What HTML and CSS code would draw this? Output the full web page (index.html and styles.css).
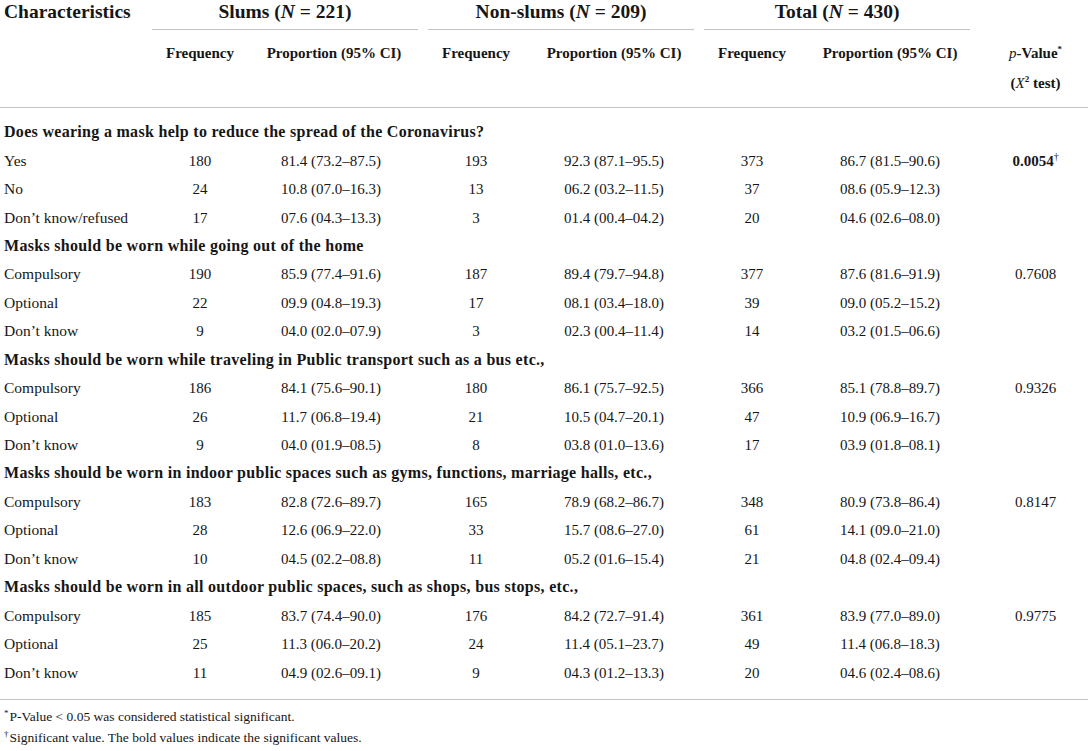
FILE: index.html
```html
<!DOCTYPE html>
<html lang="en">
<head>
<meta charset="utf-8">
<title>Mask perceptions table</title>
<link rel="stylesheet" href="styles.css">
</head>
<body>
<div class="wrap">
<table class="tbl">
  <colgroup>
    <col class="c-char">
    <col class="c-freq"><col class="c-prop">
    <col class="c-freq"><col class="c-prop">
    <col class="c-freq"><col class="c-prop">
    <col class="c-p">
  </colgroup>
  <thead>
    <tr class="h1">
      <th class="th-char" rowspan="2">Characteristics</th>
      <th class="grp" colspan="2"><div class="grp-in">Slums (<i>N</i> = 221)</div></th>
      <th class="grp" colspan="2"><div class="grp-in">Non-slums (<i>N</i> = 209)</div></th>
      <th class="grp" colspan="2"><div class="grp-in">Total (<i>N</i> = 430)</div></th>
      <th class="th-blank"></th>
    </tr>
    <tr class="h2">
      <th>Frequency</th><th class="prop prop-s">Proportion (95% CI)</th>
      <th>Frequency</th><th class="prop">Proportion (95% CI)</th>
      <th>Frequency</th><th class="prop">Proportion (95% CI)</th>
      <th class="pv"><i>p</i>-Value<sup class="ast">*</sup><br>(<i>X</i><sup>2</sup> test)</th>
    </tr>
  </thead>
  <tbody>
    <tr class="sec first"><td colspan="8">Does wearing a mask help to reduce the spread of the Coronavirus?</td></tr>
    <tr><td class="lab">Yes</td><td>180</td><td class="prop-s">81.4 (73.2–87.5)</td><td>193</td><td>92.3 (87.1–95.5)</td><td>373</td><td>86.7 (81.5–90.6)</td><td class="pv"><b>0.0054</b><sup class="dag">†</sup></td></tr>
    <tr><td class="lab">No</td><td>24</td><td class="prop-s">10.8 (07.0–16.3)</td><td>13</td><td>06.2 (03.2–11.5)</td><td>37</td><td>08.6 (05.9–12.3)</td><td class="pv"></td></tr>
    <tr><td class="lab">Don’t know/refused</td><td>17</td><td class="prop-s">07.6 (04.3–13.3)</td><td>3</td><td>01.4 (00.4–04.2)</td><td>20</td><td>04.6 (02.6–08.0)</td><td class="pv"></td></tr>

    <tr class="sec"><td colspan="8">Masks should be worn while going out of the home</td></tr>
    <tr><td class="lab">Compulsory</td><td>190</td><td class="prop-s">85.9 (77.4–91.6)</td><td>187</td><td>89.4 (79.7–94.8)</td><td>377</td><td>87.6 (81.6–91.9)</td><td class="pv">0.7608</td></tr>
    <tr><td class="lab">Optional</td><td>22</td><td class="prop-s">09.9 (04.8–19.3)</td><td>17</td><td>08.1 (03.4–18.0)</td><td>39</td><td>09.0 (05.2–15.2)</td><td class="pv"></td></tr>
    <tr><td class="lab">Don’t know</td><td>9</td><td class="prop-s">04.0 (02.0–07.9)</td><td>3</td><td>02.3 (00.4–11.4)</td><td>14</td><td>03.2 (01.5–06.6)</td><td class="pv"></td></tr>

    <tr class="sec"><td colspan="8">Masks should be worn while traveling in Public transport such as a bus etc.,</td></tr>
    <tr><td class="lab">Compulsory</td><td>186</td><td class="prop-s">84.1 (75.6–90.1)</td><td>180</td><td>86.1 (75.7–92.5)</td><td>366</td><td>85.1 (78.8–89.7)</td><td class="pv">0.9326</td></tr>
    <tr><td class="lab">Optional</td><td>26</td><td class="prop-s">11.7 (06.8–19.4)</td><td>21</td><td>10.5 (04.7–20.1)</td><td>47</td><td>10.9 (06.9–16.7)</td><td class="pv"></td></tr>
    <tr><td class="lab">Don’t know</td><td>9</td><td class="prop-s">04.0 (01.9–08.5)</td><td>8</td><td>03.8 (01.0–13.6)</td><td>17</td><td>03.9 (01.8–08.1)</td><td class="pv"></td></tr>

    <tr class="sec"><td colspan="8">Masks should be worn in indoor public spaces such as gyms, functions, marriage halls, etc.,</td></tr>
    <tr><td class="lab">Compulsory</td><td>183</td><td class="prop-s">82.8 (72.6–89.7)</td><td>165</td><td>78.9 (68.2–86.7)</td><td>348</td><td>80.9 (73.8–86.4)</td><td class="pv">0.8147</td></tr>
    <tr><td class="lab">Optional</td><td>28</td><td class="prop-s">12.6 (06.9–22.0)</td><td>33</td><td>15.7 (08.6–27.0)</td><td>61</td><td>14.1 (09.0–21.0)</td><td class="pv"></td></tr>
    <tr><td class="lab">Don’t know</td><td>10</td><td class="prop-s">04.5 (02.2–08.8)</td><td>11</td><td>05.2 (01.6–15.4)</td><td>21</td><td>04.8 (02.4–09.4)</td><td class="pv"></td></tr>

    <tr class="sec"><td colspan="8">Masks should be worn in all outdoor public spaces, such as shops, bus stops, etc.,</td></tr>
    <tr><td class="lab">Compulsory</td><td>185</td><td class="prop-s">83.7 (74.4–90.0)</td><td>176</td><td>84.2 (72.7–91.4)</td><td>361</td><td>83.9 (77.0–89.0)</td><td class="pv">0.9775</td></tr>
    <tr><td class="lab">Optional</td><td>25</td><td class="prop-s">11.3 (06.0–20.2)</td><td>24</td><td>11.4 (05.1–23.7)</td><td>49</td><td>11.4 (06.8–18.3)</td><td class="pv"></td></tr>
    <tr class="last"><td class="lab">Don’t know</td><td>11</td><td class="prop-s">04.9 (02.6–09.1)</td><td>9</td><td>04.3 (01.2–13.3)</td><td>20</td><td>04.6 (02.4–08.6)</td><td class="pv"></td></tr>
  </tbody>
</table>
<div class="notes">
  <p><sup class="fn-mark">*</sup>P-Value &lt; 0.05 was considered statistical significant.</p>
  <p><sup class="fn-mark">†</sup>Significant value. The bold values indicate the significant values.</p>
</div>
</div>
</body>
</html>
```
FILE: styles.css
```css
html, body {
  margin: 0;
  padding: 0;
  background: #ffffff;
}
body {
  font-family: "Liberation Serif", "Times New Roman", serif;
  color: #161616;
}
.wrap {
  width: 1088px;
}
.tbl {
  width: 1088px;
  border-collapse: collapse;
  table-layout: fixed;
  font-size: 15px;
}
.c-char { width: 147px; }
.c-freq { width: 106px; }
.c-prop { width: 170px; }
.c-p { width: 113px; }

.tbl th, .tbl td {
  padding: 0;
  text-align: center;
  font-weight: normal;
}
.h1 th {
  height: 31px;
  vertical-align: top;
  font-weight: bold;
  font-size: 19.5px;
  line-height: 24px;
}
.th-char {
  text-align: left !important;
  padding-left: 4px !important;
  border-bottom: 1px solid #c4c4c4;
}
.grp-in {
  margin: 0 5px;
  height: 30px;
  border-bottom: 1px solid #c4c4c4;
  box-sizing: border-box;
}
.h2 th {
  font-weight: bold;
  font-size: 15px;
  line-height: 30px;
  vertical-align: top;
  padding: 7px 0 9px;
  border-bottom: 1px solid #c4c4c4;
}
.tbl th.prop-s { padding-right: 8px; }
.tbl td.prop-s { padding-right: 14px; }
.tbl .pv { padding-left: 8px; }
.h2 .pv { font-weight: bold; }
.h2 .pv i { font-weight: normal; }
.h2 .pv sup { font-size: 9px; }
.ast {
  font-size: 8px;
  vertical-align: 6px;
}
sup {
  line-height: 0;
}
.tbl tbody td {
  height: 28.45px;
  line-height: 20px;
  vertical-align: middle;
}
.tbl td.lab {
  text-align: left;
  padding-left: 4px;
  white-space: nowrap;
  font-size: 15.5px;
}
.sec td {
  text-align: left !important;
  padding-left: 4px !important;
  font-weight: bold;
  font-size: 16px;
  letter-spacing: 0.3px;
  white-space: nowrap;
}
.first td {
  padding-top: 10px;
}
.last td {
  padding-bottom: 12px;
}
.tbl tbody tr.last td {
  border-bottom: 1px solid #c4c4c4;
}
.dag {
  font-size: 10px;
  vertical-align: 6px;
}
.notes {
  font-size: 13.5px;
  line-height: 21px;
  padding-top: 6px;
  padding-left: 4px;
}
.notes p {
  margin: 0;
}
.fn-mark {
  font-size: 9px;
  vertical-align: 5px;
  margin-right: 1px;
}
```
